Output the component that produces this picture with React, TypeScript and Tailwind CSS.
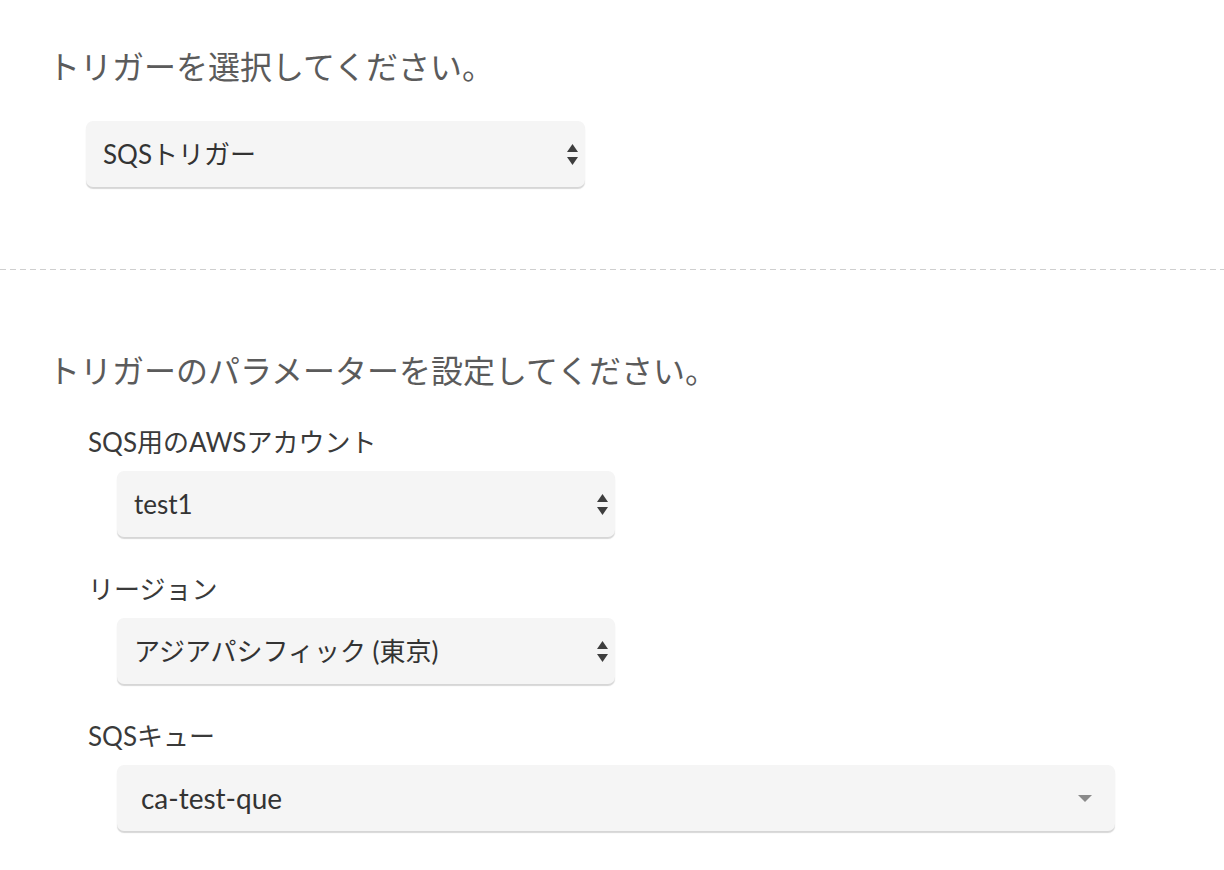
import React from "react";

function DoubleArrow() {
  return (
    <svg width="11" height="21" viewBox="0 0 11 21" className="shrink-0">
      <polygon points="0,8 5.5,0 11,8" fill="#3e3e3e" />
      <polygon points="0,13 11,13 5.5,21" fill="#3e3e3e" />
    </svg>
  );
}

function DownArrow() {
  return (
    <svg width="14" height="7" viewBox="0 0 14 7" className="shrink-0">
      <polygon points="0,0 14,0 7,7" fill="#8a8a8a" />
    </svg>
  );
}

function NativeSelect({ value, width }: { value: string; width: string }) {
  return (
    <div
      className={`${width} flex h-[66px] items-center justify-between rounded-[7px] bg-[#f5f5f5] pl-[17px] pr-[7px] shadow-[0_2px_1px_rgba(0,0,0,0.16)]`}
    >
      <span className="text-[26px] leading-[30px] text-[#333333]">{value}</span>
      <DoubleArrow />
    </div>
  );
}

function Field({ label, children }: { label: string; children: React.ReactNode }) {
  return (
    <div className="flex flex-col">
      <div className="text-[26px] leading-[30px] text-[#3a3a3a]">{label}</div>
      <div className="ml-[29px] mt-[14px]">{children}</div>
    </div>
  );
}

export default function App() {
  return (
    <div className="min-h-[870px] w-full bg-white font-['Lato','Noto_Sans_CJK_JP',sans-serif]">
      <section className="pl-12 pt-[47px]">
        <h2 className="text-[32px] leading-[40px] font-normal text-[#5b5b5b]">
          トリガーを選択してください。
        </h2>
        <div className="ml-[38px] mt-[34px]">
          <NativeSelect value="SQSトリガー" width="w-[499px]" />
        </div>
      </section>

      <div className="mt-[82px] h-px w-full bg-[repeating-linear-gradient(to_right,#cfcfcf_0px,#cfcfcf_6px,transparent_6px,transparent_10px)]" />

      <section className="pl-12 pt-[81px] pb-10">
        <h2 className="text-[32px] leading-[40px] font-normal text-[#5b5b5b]">
          トリガーのパラメーターを設定してください。
        </h2>
        <div className="ml-10 mt-9 flex flex-col gap-[37px]">
          <Field label="SQS用のAWSアカウント">
            <NativeSelect value="test1" width="w-[498px]" />
          </Field>
          <Field label="リージョン">
            <NativeSelect value="アジアパシフィック (東京)" width="w-[498px]" />
          </Field>
          <Field label="SQSキュー">
            <div className="flex h-[66px] w-[998px] items-center justify-between rounded-[7px] bg-[#f5f5f5] pl-[24px] pr-[23px] shadow-[0_2px_1px_rgba(0,0,0,0.16)]">
              <span className="text-[28px] leading-[32px] text-[#333333]">ca-test-que</span>
              <DownArrow />
            </div>
          </Field>
        </div>
      </section>
    </div>
  );
}
